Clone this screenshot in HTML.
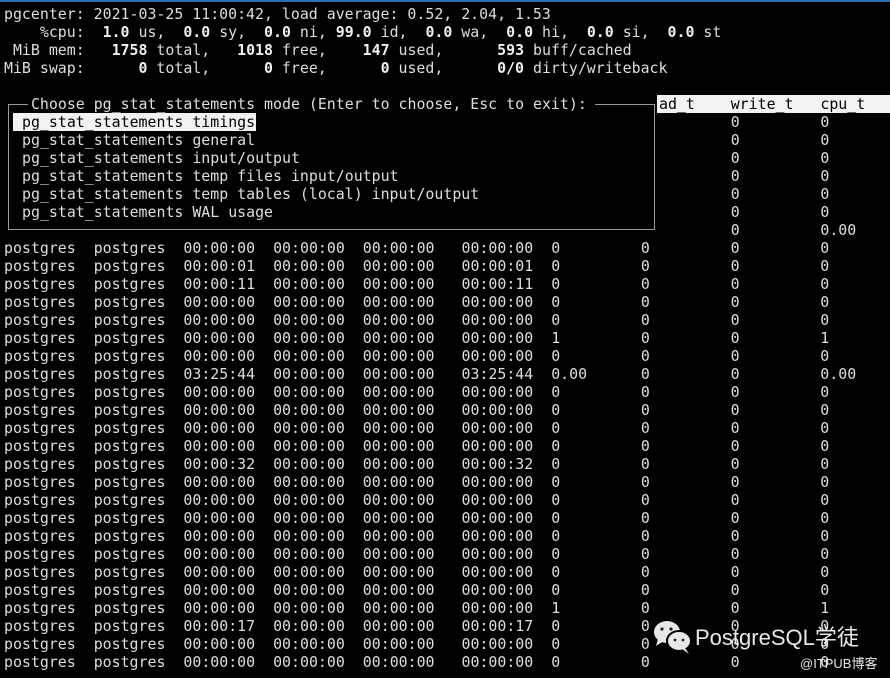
<!DOCTYPE html>
<html><head><meta charset="utf-8"><style>
body{margin:0;width:890px;height:678px;background:#000;overflow:hidden;position:relative;font-family:"DejaVu Sans Mono","Liberation Mono",monospace;font-size:14.9px;color:#dedede}
.topbar{position:absolute;left:0;top:0;width:890px;height:2px;background:#2a6fb8}
pre{margin:0;font:inherit;position:absolute;left:4px;line-height:18px;white-space:pre}
b{font-weight:bold;color:#f0f0f0}
.k{color:#000}
.r{position:absolute;left:4px;height:18px;line-height:18px;width:886px}
.r span{position:absolute;white-space:pre}
.a{left:0}.b2{left:89.7px}.c{left:179.4px}.d{left:269.1px}.e{left:358.8px}.f{left:457.5px}.g{left:547.2px}.h{left:636.9px}.i{left:726.6px}.j{left:816.3px}
.box{position:absolute;left:8px;top:104px;width:645px;height:125px;border:1px solid #9a9a9a;border-top:none}
.ln{position:absolute;top:104px;height:1px;background:#9a9a9a}
.hdr{position:absolute;left:657px;top:95px;width:233px;height:18px;background:#f2f2f2}
.sel{position:absolute;left:13px;top:113px;width:243px;height:18px;background:#f2f2f2}
.wm{position:absolute;left:695px;top:620px;font-family:"Liberation Sans","Noto Sans CJK SC",sans-serif;font-size:22px;color:#e8e8e8}
.wm2{position:absolute;left:800px;top:653px;font-family:"Liberation Sans","Noto Sans CJK SC",sans-serif;font-size:13px;color:#e8e8e8}
</style></head><body>
<div class="topbar"></div>
<pre style="top:5px">pgcenter: 2021-03-25 11:00:42, load average: 0.52, 2.04, 1.53
    %cpu:  <b>1.0</b> us,  <b>0.0</b> sy,  <b>0.0</b> ni, <b>99.0</b> id,  <b>0.0</b> wa,  <b>0.0</b> hi,  <b>0.0</b> si,  <b>0.0</b> st
 MiB mem:   <b>1758</b> total,   <b>1018</b> free,    <b>147</b> used,      <b>593</b> buff/cached
MiB swap:      <b>0</b> total,      <b>0</b> free,      <b>0</b> used,      <b>0/0</b> dirty/writeback</pre>
<div class="box"></div>
<div class="ln" style="left:8px;width:20px"></div>
<div class="ln" style="left:595px;width:60px"></div>
<div class="hdr"></div>
<div class="sel"></div>
<pre style="top:95px;left:22px"> Choose pg_stat_statements mode (Enter to choose, Esc to exit): 
<span class="k">pg_stat_statements timings</span>
pg_stat_statements general
pg_stat_statements input/output
pg_stat_statements temp files input/output
pg_stat_statements temp tables (local) input/output
pg_stat_statements WAL usage</pre>
<pre style="top:95px;left:659px"><span class="k">ad_t    write_t   cpu_t</span>
        0         0
        0         0
        0         0
        0         0
        0         0
        0         0
        0         0.00</pre>

<div class="r" style="top:239px"><span class="a">postgres</span><span class="b2">postgres</span><span class="c">00:00:00</span><span class="d">00:00:00</span><span class="e">00:00:00</span><span class="f">00:00:00</span><span class="g">0</span><span class="h">0</span><span class="i">0</span><span class="j">0</span></div>
<div class="r" style="top:257px"><span class="a">postgres</span><span class="b2">postgres</span><span class="c">00:00:01</span><span class="d">00:00:00</span><span class="e">00:00:00</span><span class="f">00:00:01</span><span class="g">0</span><span class="h">0</span><span class="i">0</span><span class="j">0</span></div>
<div class="r" style="top:275px"><span class="a">postgres</span><span class="b2">postgres</span><span class="c">00:00:11</span><span class="d">00:00:00</span><span class="e">00:00:00</span><span class="f">00:00:11</span><span class="g">0</span><span class="h">0</span><span class="i">0</span><span class="j">0</span></div>
<div class="r" style="top:293px"><span class="a">postgres</span><span class="b2">postgres</span><span class="c">00:00:00</span><span class="d">00:00:00</span><span class="e">00:00:00</span><span class="f">00:00:00</span><span class="g">0</span><span class="h">0</span><span class="i">0</span><span class="j">0</span></div>
<div class="r" style="top:311px"><span class="a">postgres</span><span class="b2">postgres</span><span class="c">00:00:00</span><span class="d">00:00:00</span><span class="e">00:00:00</span><span class="f">00:00:00</span><span class="g">0</span><span class="h">0</span><span class="i">0</span><span class="j">0</span></div>
<div class="r" style="top:329px"><span class="a">postgres</span><span class="b2">postgres</span><span class="c">00:00:00</span><span class="d">00:00:00</span><span class="e">00:00:00</span><span class="f">00:00:00</span><span class="g">1</span><span class="h">0</span><span class="i">0</span><span class="j">1</span></div>
<div class="r" style="top:347px"><span class="a">postgres</span><span class="b2">postgres</span><span class="c">00:00:00</span><span class="d">00:00:00</span><span class="e">00:00:00</span><span class="f">00:00:00</span><span class="g">0</span><span class="h">0</span><span class="i">0</span><span class="j">0</span></div>
<div class="r" style="top:365px"><span class="a">postgres</span><span class="b2">postgres</span><span class="c">03:25:44</span><span class="d">00:00:00</span><span class="e">00:00:00</span><span class="f">03:25:44</span><span class="g">0.00</span><span class="h">0</span><span class="i">0</span><span class="j">0.00</span></div>
<div class="r" style="top:383px"><span class="a">postgres</span><span class="b2">postgres</span><span class="c">00:00:00</span><span class="d">00:00:00</span><span class="e">00:00:00</span><span class="f">00:00:00</span><span class="g">0</span><span class="h">0</span><span class="i">0</span><span class="j">0</span></div>
<div class="r" style="top:401px"><span class="a">postgres</span><span class="b2">postgres</span><span class="c">00:00:00</span><span class="d">00:00:00</span><span class="e">00:00:00</span><span class="f">00:00:00</span><span class="g">0</span><span class="h">0</span><span class="i">0</span><span class="j">0</span></div>
<div class="r" style="top:419px"><span class="a">postgres</span><span class="b2">postgres</span><span class="c">00:00:00</span><span class="d">00:00:00</span><span class="e">00:00:00</span><span class="f">00:00:00</span><span class="g">0</span><span class="h">0</span><span class="i">0</span><span class="j">0</span></div>
<div class="r" style="top:437px"><span class="a">postgres</span><span class="b2">postgres</span><span class="c">00:00:00</span><span class="d">00:00:00</span><span class="e">00:00:00</span><span class="f">00:00:00</span><span class="g">0</span><span class="h">0</span><span class="i">0</span><span class="j">0</span></div>
<div class="r" style="top:455px"><span class="a">postgres</span><span class="b2">postgres</span><span class="c">00:00:32</span><span class="d">00:00:00</span><span class="e">00:00:00</span><span class="f">00:00:32</span><span class="g">0</span><span class="h">0</span><span class="i">0</span><span class="j">0</span></div>
<div class="r" style="top:473px"><span class="a">postgres</span><span class="b2">postgres</span><span class="c">00:00:00</span><span class="d">00:00:00</span><span class="e">00:00:00</span><span class="f">00:00:00</span><span class="g">0</span><span class="h">0</span><span class="i">0</span><span class="j">0</span></div>
<div class="r" style="top:491px"><span class="a">postgres</span><span class="b2">postgres</span><span class="c">00:00:00</span><span class="d">00:00:00</span><span class="e">00:00:00</span><span class="f">00:00:00</span><span class="g">0</span><span class="h">0</span><span class="i">0</span><span class="j">0</span></div>
<div class="r" style="top:509px"><span class="a">postgres</span><span class="b2">postgres</span><span class="c">00:00:00</span><span class="d">00:00:00</span><span class="e">00:00:00</span><span class="f">00:00:00</span><span class="g">0</span><span class="h">0</span><span class="i">0</span><span class="j">0</span></div>
<div class="r" style="top:527px"><span class="a">postgres</span><span class="b2">postgres</span><span class="c">00:00:00</span><span class="d">00:00:00</span><span class="e">00:00:00</span><span class="f">00:00:00</span><span class="g">0</span><span class="h">0</span><span class="i">0</span><span class="j">0</span></div>
<div class="r" style="top:545px"><span class="a">postgres</span><span class="b2">postgres</span><span class="c">00:00:00</span><span class="d">00:00:00</span><span class="e">00:00:00</span><span class="f">00:00:00</span><span class="g">0</span><span class="h">0</span><span class="i">0</span><span class="j">0</span></div>
<div class="r" style="top:563px"><span class="a">postgres</span><span class="b2">postgres</span><span class="c">00:00:00</span><span class="d">00:00:00</span><span class="e">00:00:00</span><span class="f">00:00:00</span><span class="g">0</span><span class="h">0</span><span class="i">0</span><span class="j">0</span></div>
<div class="r" style="top:581px"><span class="a">postgres</span><span class="b2">postgres</span><span class="c">00:00:00</span><span class="d">00:00:00</span><span class="e">00:00:00</span><span class="f">00:00:00</span><span class="g">0</span><span class="h">0</span><span class="i">0</span><span class="j">0</span></div>
<div class="r" style="top:599px"><span class="a">postgres</span><span class="b2">postgres</span><span class="c">00:00:00</span><span class="d">00:00:00</span><span class="e">00:00:00</span><span class="f">00:00:00</span><span class="g">1</span><span class="h">0</span><span class="i">0</span><span class="j">1</span></div>
<div class="r" style="top:617px"><span class="a">postgres</span><span class="b2">postgres</span><span class="c">00:00:17</span><span class="d">00:00:00</span><span class="e">00:00:00</span><span class="f">00:00:17</span><span class="g">0</span><span class="h">0</span><span class="i">0</span><span class="j">0</span></div>
<div class="r" style="top:635px"><span class="a">postgres</span><span class="b2">postgres</span><span class="c">00:00:00</span><span class="d">00:00:00</span><span class="e">00:00:00</span><span class="f">00:00:00</span><span class="g">0</span><span class="h">0</span><span class="i">0</span><span class="j">0</span></div>
<div class="r" style="top:653px"><span class="a">postgres</span><span class="b2">postgres</span><span class="c">00:00:00</span><span class="d">00:00:00</span><span class="e">00:00:00</span><span class="f">00:00:00</span><span class="g">0</span><span class="h">0</span><span class="i">0</span><span class="j">0</span></div>

<svg style="position:absolute;left:652px;top:619px" width="42" height="36" viewBox="0 0 42 36">
<ellipse cx="15" cy="13" rx="13" ry="11" fill="#e8e8e8"/>
<path d="M6 20 L4 27 L12 22Z" fill="#e8e8e8"/>
<ellipse cx="27" cy="22" rx="12" ry="10" fill="#e8e8e8" stroke="#000" stroke-width="2"/>
<path d="M33 29 L37 35 L30 30Z" fill="#e8e8e8"/>
<circle cx="10" cy="10" r="1.6" fill="#222"/><circle cx="19" cy="10" r="1.6" fill="#222"/>
<circle cx="23" cy="21" r="1.4" fill="#222"/><circle cx="31" cy="21" r="1.4" fill="#222"/>
</svg>
<div class="wm">PostgreSQL学徒</div>
<div class="wm2">@ITPUB博客</div>
</body></html>
